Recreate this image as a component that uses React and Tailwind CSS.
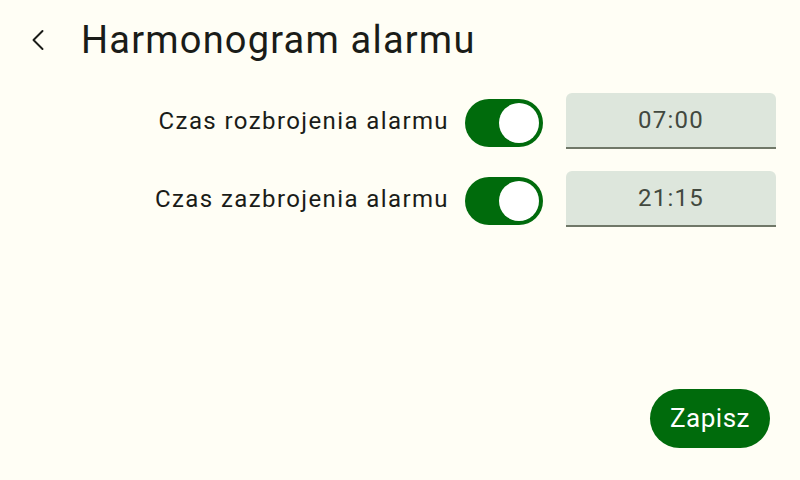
import { ChevronLeft } from "lucide-react";

const schedule = [
  { id: "disarm", label: "Czas rozbrojenia alarmu", time: "07:00", enabled: true },
  { id: "arm", label: "Czas zazbrojenia alarmu", time: "21:15", enabled: true },
];

const Toggle = ({ on }) => (
  <button
    type="button"
    role="switch"
    aria-checked={on}
    className={`mt-[4px] flex h-[48px] w-[78px] shrink-0 items-center rounded-full px-[4px] ${
      on ? "justify-end bg-[#006b0c]" : "justify-start bg-[#dde6dc]"
    }`}
  >
    <span className="h-[40px] w-[40px] rounded-full bg-white" />
  </button>
);

const TimeField = ({ value }) => (
  <div className="flex h-[56px] w-[210px] items-center justify-center rounded-t-[6px] border-b-2 border-[#707868] bg-[#dde6dc] text-[24px] tracking-[1.2px] text-[#42493f]">
    {value}
  </div>
);

export default function App() {
  return (
    <div
      className="flex h-[480px] w-[800px] flex-col bg-[#fffef5] text-[#1a1c18]"
      style={{ fontFamily: "Roboto, 'Noto Sans', sans-serif" }}
    >
      <header className="flex h-[80px] items-center pl-[20px]">
        <button type="button" className="flex h-[36px] w-[36px] items-center justify-center text-[#1a1c18]">
          <ChevronLeft size={36} strokeWidth={1.3} />
        </button>
        <h1 className="ml-[25px] text-[38px] leading-none tracking-[1.2px]">Harmonogram alarmu</h1>
      </header>

      <div className="mt-[13px] flex flex-col items-end gap-[22px] pr-[24px]">
        {schedule.map((row) => (
          <div key={row.id} className="flex items-center">
            <span className="mr-[16px] text-[24px] tracking-[1.4px]">{row.label}</span>
            <Toggle on={row.enabled} />
            <div className="ml-[23px]">
              <TimeField value={row.time} />
            </div>
          </div>
        ))}
      </div>

      <div className="mt-auto flex justify-end pb-[32px] pr-[30px]">
        <button
          type="button"
          className="h-[59px] rounded-full bg-[#006b0c] px-[20px] text-[26px] tracking-[0.5px] text-white"
        >
          Zapisz
        </button>
      </div>
    </div>
  );
}
